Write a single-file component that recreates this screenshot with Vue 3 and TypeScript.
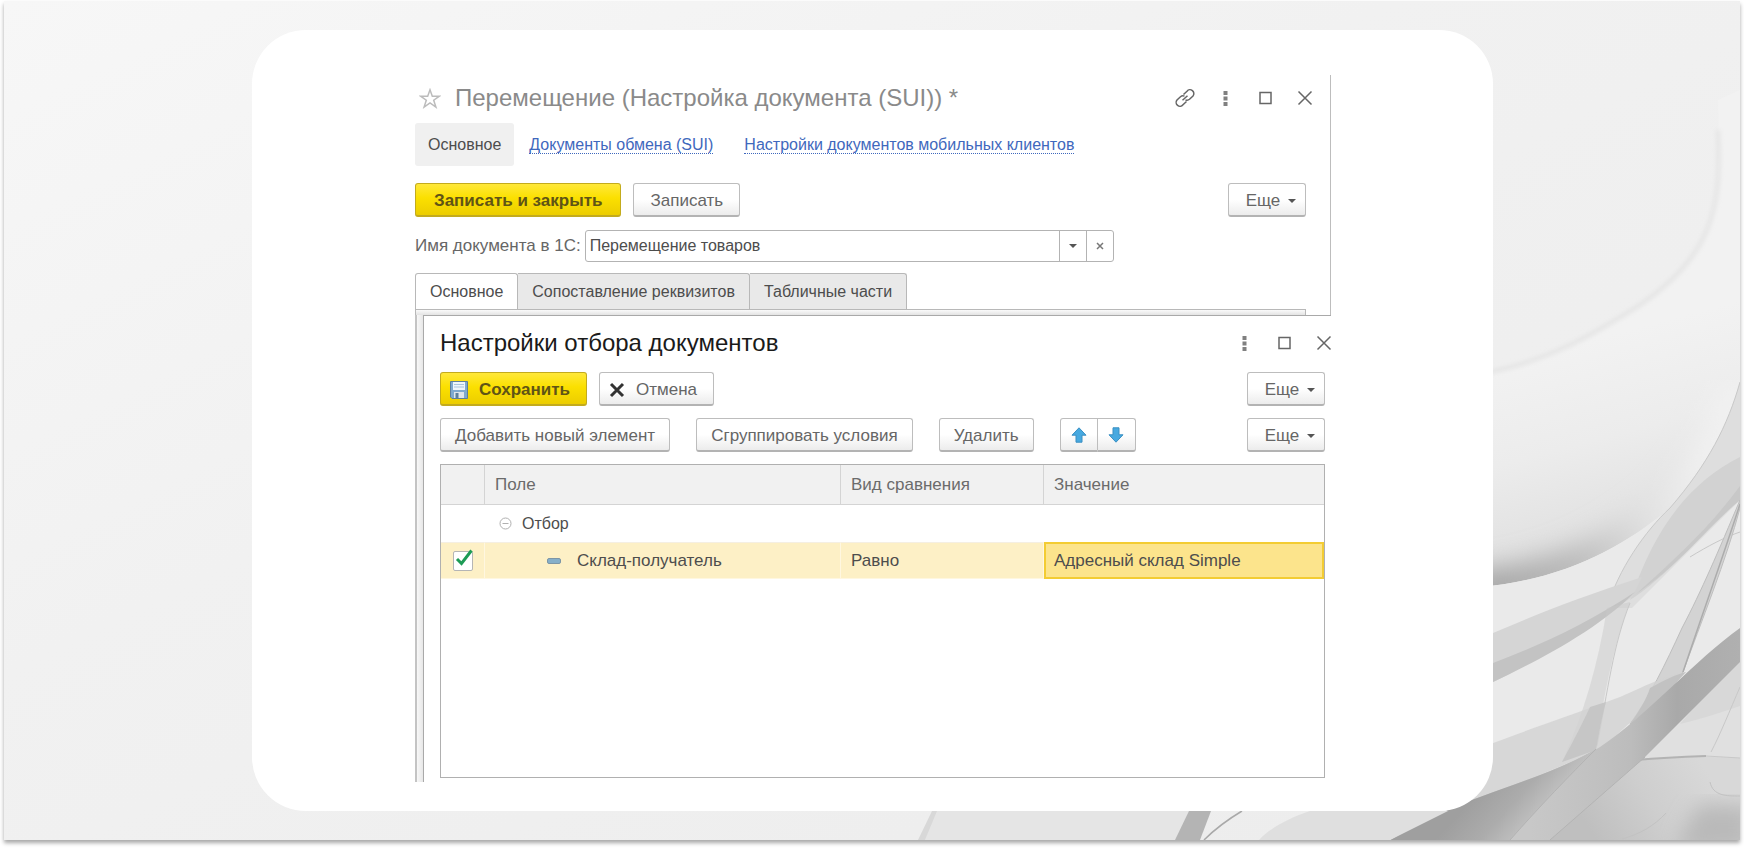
<script setup lang="ts">
import { ref } from 'vue'

interface Condition {
  enabled: boolean
  field: string
  comparison: string
  value: string
}

const documentName = ref('Перемещение товаров')
const pages = ['Основное', 'Сопоставление реквизитов', 'Табличные части']
const activePage = ref(0)
const expanded = ref(true)
const conditions = ref<Condition[]>([
  { enabled: true, field: 'Склад-получатель', comparison: 'Равно', value: 'Адресный склад Simple' },
])
</script>

<template>
  <div class="page">
    <main class="slide">
      <svg class="backdrop" viewBox="4 1 1736 839" preserveAspectRatio="none" aria-hidden="true">
        <defs>
          <linearGradient id="base" x1="0" y1="0" x2="1" y2="1">
            <stop offset="0" stop-color="#f7f7f7" />
            <stop offset="0.4" stop-color="#f1f1f1" />
            <stop offset="1" stop-color="#ececec" />
          </linearGradient>
          <linearGradient id="lip" gradientUnits="userSpaceOnUse" x1="1590" y1="340" x2="1640" y2="530">
            <stop offset="0" stop-color="#f2f2f2" />
            <stop offset="0.5" stop-color="#ececec" />
            <stop offset="1" stop-color="#e0e0e0" />
          </linearGradient>
          <linearGradient id="rim" gradientUnits="userSpaceOnUse" x1="1493" y1="0" x2="1700" y2="0">
            <stop offset="0" stop-color="#9c9c9c" />
            <stop offset="0.4" stop-color="#b4b4b4" />
            <stop offset="0.75" stop-color="#e2e2e2" />
            <stop offset="1" stop-color="#f2f2f2" />
          </linearGradient>
          <linearGradient id="band" gradientUnits="userSpaceOnUse" x1="1530" y1="0" x2="1740" y2="0">
            <stop offset="0" stop-color="#c8c8c8" />
            <stop offset="0.35" stop-color="#c0c0c0" />
            <stop offset="0.48" stop-color="#bcbcbc" />
            <stop offset="0.7" stop-color="#a9a9a9" />
            <stop offset="1" stop-color="#b0b0b0" />
          </linearGradient>
          <linearGradient id="fold" gradientUnits="userSpaceOnUse" x1="1480" y1="790" x2="1530" y2="835">
            <stop offset="0" stop-color="#9f9f9f" />
            <stop offset="0.5" stop-color="#acacac" />
            <stop offset="1" stop-color="#c6c6c6" />
          </linearGradient>
          <linearGradient id="floor" gradientUnits="userSpaceOnUse" x1="1590" y1="830" x2="1700" y2="760">
            <stop offset="0" stop-color="#bfbfbf" />
            <stop offset="0.5" stop-color="#cecece" />
            <stop offset="1" stop-color="#d8d8d8" />
          </linearGradient>
          <clipPath id="inside-lip">
            <path d="M1740 382C1728 425 1708 464 1670 508C1620 550 1560 580 1480 587V380H1740Z" />
          </clipPath>
          <filter id="haze" x="-20%" y="-20%" width="140%" height="140%"><feGaussianBlur stdDeviation="2" /></filter>
          <filter id="soft" x="-20%" y="-20%" width="140%" height="140%"><feGaussianBlur stdDeviation="10" /></filter>
          <filter id="softer" x="-20%" y="-20%" width="140%" height="140%"><feGaussianBlur stdDeviation="14" /></filter>
        </defs>
        <rect x="4" y="1" width="1736" height="839" fill="url(#base)" />
        <path d="M1718 100C1722 210 1712 255 1640 305C1600 330 1550 362 1480 374V587C1560 580 1620 550 1670 508C1708 464 1728 425 1740 382V90Z" fill="url(#lip)" />
        <path d="M1718 130C1722 210 1712 255 1640 305C1600 330 1550 362 1480 374" fill="none" stroke="#e4e4e4" stroke-width="4" filter="url(#haze)" />
        <g clip-path="url(#inside-lip)">
          <path d="M1740 382C1728 425 1708 464 1670 508C1620 550 1560 580 1470 590" fill="none" stroke="url(#rim)" stroke-width="32" filter="url(#softer)" />
        </g>
        <path d="M1740 382C1728 425 1708 464 1670 508C1620 550 1560 580 1480 587V840H1740Z" fill="#eaeaea" />
        <path d="M1740 382C1728 425 1708 464 1670 508C1645 531 1618 570 1607 608H1632L1740 500Z" fill="#dedede" />
        <path d="M1740 382C1728 425 1708 464 1670 508C1645 531 1618 570 1607 608" fill="none" stroke="#c9c9c9" />
        <path d="M1740 457C1705 475 1676 502 1652 548C1642 568 1636 584 1630 600C1668 576 1705 530 1740 500Z" fill="#d2d2d2" />
        <path d="M1740 486C1712 524 1680 555 1636 594C1680 565 1710 524 1740 500Z" fill="#c8c8c8" />
        <path d="M1493 633C1535 615 1580 597 1642 577L1632 597C1590 626 1540 660 1493 682Z" fill="#d5d5d5" />
        <path d="M1493 663C1540 645 1585 625 1635 592C1600 628 1540 660 1493 682Z" fill="#c3c3c3" />
        <path d="M1607 608C1598 665 1584 713 1562 762L1596 750C1603 700 1612 650 1630 602Z" fill="#c8c8c8" fill-opacity="0.45" />
        <path d="M1630 603C1613 645 1608 690 1597 746M1690 557C1708 546 1725 537 1740 532" fill="none" stroke="#c8c8c8" />
        <path d="M1740 500C1718 552 1702 590 1682 628C1665 665 1650 696 1630 724L1660 705C1670 690 1678 680 1683 672C1700 625 1727 558 1740 508Z" fill="#d3d3d3" stroke="#bebebe" />
        <path d="M1740 504C1724 554 1705 606 1683 672" fill="none" stroke="#acacac" stroke-width="1.5" />
        <path d="M1480 748C1535 727 1580 712 1620 697C1645 686 1662 677 1686 672L1600 750L1450 812Z" fill="#d2d2d2" fill-opacity="0.8" />
        <path d="M1562 762C1575 738 1583 722 1590 707L1606 702C1601 720 1598 740 1596 750Z" fill="#c6c6c6" />
        <path d="M1630 724C1640 710 1646 700 1650 688C1665 680 1674 675 1686 672L1660 700Z" fill="#c2c2c2" />
        <path d="M1600 780L1740 655V840H1490Z" fill="#e0e0e0" />
        <path d="M1680 724C1705 718 1722 712 1740 706V655Z" fill="#d8d8d8" />
        <path d="M1740 687C1730 710 1720 735 1711 752" fill="none" stroke="#c8c8c8" />
        <path d="M1636 759C1670 757 1710 756 1740 758V840H1540Z" fill="url(#floor)" />
        <path d="M1636 760C1660 758 1680 757 1706 756" fill="none" stroke="#b3b3b3" stroke-width="2" />
        <path d="M1706 756L1740 758" fill="none" stroke="#c8c8c8" />
        <path d="M1676 852C1688 820 1696 806 1704 804H1752V852Z" fill="#b3b3b3" fill-opacity="0.8" filter="url(#soft)" />
        <path d="M1666 813C1654 826 1640 834 1622 839M1710 782C1713 796 1726 796 1740 796" fill="none" stroke="#c2c2c2" />
        <path d="M1390 840C1425 820 1455 806 1480 797C1530 779 1570 765 1600 747C1650 713 1695 660 1740 628V662L1645 757L1550 840Z" fill="url(#band)" />
        <path d="M1390 840C1425 820 1455 806 1480 797C1530 779 1570 765 1596 749C1570 775 1540 806 1510 840Z" fill="url(#fold)" />
        <path d="M1596 749C1570 775 1540 806 1510 840M1645 757L1550 840" fill="none" stroke="#b3b3b3" />
        <path d="M935 811L925 840H1176L1190 811Z" fill="#e5e5e5" />
        <path d="M932 811L918 840H925L937 811Z" fill="#d8d8d8" />
        <path d="M1189 811H1211L1200 840H1175Z" fill="#b4b4b4" />
        <path d="M1242 811C1227 820 1212 832 1204 840" fill="none" stroke="#a9a9a9" stroke-width="1.5" />
        <path d="M1310 811C1289 818 1270 828 1259 840H1390L1448 811Z" fill="#dfdfdf" />
      </svg>

      <div class="card">
        <section class="window">
          <div class="window-top">
            <header class="titlebar">
              <button class="star" type="button" aria-label="Избранное">
                <svg viewBox="0 0 22 21"><path d="M11 1.8L13.3 8.2H20.4L14.7 12.2L16.9 19.1L11 14.9L5.1 19.1L7.3 12.2L1.6 8.2H8.7Z" /></svg>
              </button>
              <h1>Перемещение (Настройка документа (SUI)) *</h1>
              <div class="window-icons">
                <button type="button" aria-label="Ссылка">
                  <svg viewBox="0 0 22 22"><path d="M9.500 7.500L13 4.200A3.600 3.600 0 0 1 19 9L15.500 12.300A3.600 3.600 0 0 1 11.500 12.800M12.500 14.500L9 17.800A3.600 3.600 0 0 1 3 13L6.500 9.700A3.600 3.600 0 0 1 10.500 9.200M8.500 13.300L13.500 8.700" /></svg>
                </button>
                <button type="button" aria-label="Меню"><svg viewBox="0 0 22 22"><path class="dots" d="M9.500 4h4v4h-4zM9.500 9.500h4v4h-4zM9.500 15h4v4h-4z" /></svg></button>
                <button type="button" aria-label="Развернуть"><svg viewBox="0 0 22 22"><rect x="6" y="5.500" width="11" height="11" /></svg></button>
                <button type="button" aria-label="Закрыть"><svg viewBox="0 0 22 22"><path d="M4.500 4.500L17.500 17.500M17.500 4.500L4.500 17.500" /></svg></button>
              </div>
            </header>

            <nav class="links">
              <a class="current" href="#main">Основное</a>
              <a href="#exchange"><span>Документы обмена (SUI)</span></a>
              <a href="#mobile"><span>Настройки документов мобильных клиентов</span></a>
            </nav>

            <div class="toolbar">
              <button class="btn primary" type="button">Записать и закрыть</button>
              <button class="btn" type="button">Записать</button>
              <button class="btn more" type="button">Еще<i class="caret"></i></button>
            </div>

            <div class="field">
              <label for="doc-name">Имя документа в 1С:</label>
              <div class="combo">
                <input id="doc-name" v-model="documentName" type="text" />
                <button type="button" aria-label="Выбрать"><i class="caret"></i></button>
                <button type="button" aria-label="Очистить" @click="documentName = ''">
                  <svg viewBox="0 0 8 8"><path d="M1 1L7 7M7 1L1 7" /></svg>
                </button>
              </div>
            </div>

            <div class="tabs" role="tablist">
              <button
                v-for="(page, index) in pages"
                :key="page"
                type="button"
                role="tab"
                :aria-selected="activePage === index"
                :class="{ active: activePage === index }"
                @click="activePage = index"
              >{{ page }}</button>
            </div>
            <div class="tab-edge"></div>
          </div>

          <div class="panel">
            <section class="dialog" aria-labelledby="dialog-title">
              <header class="titlebar">
                <h2 id="dialog-title">Настройки отбора документов</h2>
                <div class="window-icons">
                  <button type="button" aria-label="Меню"><svg viewBox="0 0 22 22"><path class="dots" d="M9.500 4h4v4h-4zM9.500 9.500h4v4h-4zM9.500 15h4v4h-4z" /></svg></button>
                  <button type="button" aria-label="Развернуть"><svg viewBox="0 0 22 22"><rect x="6" y="5.500" width="11" height="11" /></svg></button>
                  <button type="button" aria-label="Закрыть"><svg viewBox="0 0 22 22"><path d="M4.500 4.500L17.500 17.500M17.500 4.500L4.500 17.500" /></svg></button>
                </div>
              </header>

              <div class="toolbar">
                <button class="btn primary with-icon" type="button">
                  <svg class="disk" viewBox="0 0 20 20">
                    <path d="M1.500 1.500H18.500V18.500H3L1.500 17Z" fill="#7fa9cf" stroke="#5d7f9c" />
                    <rect x="4" y="2" width="12" height="8" fill="#eef5fb" />
                    <path d="M5 4.500H15M5 7H15" stroke="#a9c4dc" />
                    <rect x="5" y="12" width="10" height="6" fill="#dfe6ec" />
                    <rect x="6.500" y="13" width="3" height="5" fill="#5d7f9c" />
                  </svg>
                  Сохранить
                </button>
                <button class="btn with-icon cancel" type="button">
                  <svg class="cross" viewBox="0 0 16 16"><path d="M2 2L14 14M14 2L2 14" /></svg>
                  Отмена
                </button>
                <button class="btn more" type="button">Еще<i class="caret"></i></button>
              </div>

              <div class="toolbar commands">
                <button class="btn" type="button">Добавить новый элемент</button>
                <button class="btn" type="button">Сгруппировать условия</button>
                <button class="btn" type="button">Удалить</button>
                <div class="pair">
                  <button class="btn" type="button" aria-label="Вверх">
                    <svg viewBox="0 0 16 16"><path d="M8 .8L15 8.200H11V15.200H5V8.200H1Z" /></svg>
                  </button>
                  <button class="btn" type="button" aria-label="Вниз">
                    <svg viewBox="0 0 16 16"><path d="M8 15.200L15 7.800H11V.8H5V7.800H1Z" /></svg>
                  </button>
                </div>
                <button class="btn more" type="button">Еще<i class="caret"></i></button>
              </div>

              <div class="grid">
                <table>
                  <colgroup><col class="c-check" /><col class="c-field" /><col class="c-kind" /><col /></colgroup>
                  <thead>
                    <tr><th aria-label="Использование"></th><th>Поле</th><th>Вид сравнения</th><th>Значение</th></tr>
                  </thead>
                  <tbody>
                    <tr class="group">
                      <td></td>
                      <td>
                        <div class="node">
                          <button class="toggle" type="button" :aria-expanded="expanded" aria-label="Свернуть" @click="expanded = !expanded">
                            <svg viewBox="0 0 13 13"><circle cx="6.500" cy="6.500" r="5.500" /><path d="M3.500 6.500H9.500" /></svg>
                          </button>
                          Отбор
                        </div>
                      </td>
                      <td></td>
                      <td></td>
                    </tr>
                    <template v-if="expanded">
                      <tr v-for="item in conditions" :key="item.field" class="selected">
                        <td>
                          <label class="check">
                            <input v-model="item.enabled" type="checkbox" :aria-label="item.field" />
                            <svg v-if="item.enabled" viewBox="0 0 20 20"><path d="M4 8L8.500 12.500L18.500 -.5" /></svg>
                          </label>
                        </td>
                        <td><div class="node leaf"><i class="dash"></i>{{ item.field }}</div></td>
                        <td>{{ item.comparison }}</td>
                        <td class="focus">{{ item.value }}</td>
                      </tr>
                    </template>
                  </tbody>
                </table>
              </div>
            </section>
          </div>
        </section>
      </div>
    </main>
  </div>
</template>

<style>
body {
  margin: 0;
  background: #fff;
}
</style>

<style scoped>
* {
  box-sizing: border-box;
}
.page {
  display: flex;
  min-height: 100vh;
  padding: 1px 4px 8px;
  font: 17px/20px "Liberation Sans", Arial, sans-serif;
  color: #4d4d4d;
}
button,
input {
  font: inherit;
  color: inherit;
}
button {
  padding: 0;
  border: 0;
  background: none;
}
svg {
  display: block;
}
.slide {
  position: relative;
  display: flex;
  flex: 1;
  min-width: 0;
  padding: 29px 247px 29px 248px;
  box-shadow: 0 3px 4px #a8a8a8;
}
.backdrop {
  position: absolute;
  inset: 0;
  width: 100%;
  height: 100%;
}
.card {
  position: relative;
  display: flex;
  flex: 1;
  min-width: 0;
  padding: 45px 162px 29px 163px;
  border-radius: 54px;
  background: #fff;
}
.window {
  display: flex;
  flex: 1;
  flex-direction: column;
  min-width: 0;
}
.window-top {
  padding-right: 24px;
  border-right: 1px solid #bdbdbd;
}
.titlebar {
  display: flex;
  align-items: center;
  height: 46px;
}
h1,
h2 {
  margin: 0;
  font-size: 24px;
  line-height: 32px;
  font-weight: 400;
  white-space: nowrap;
}
h1 {
  color: #8a8a8a;
}
h2 {
  color: #1a1a1a;
}
.star {
  width: 22px;
  margin: 0 14px 0 4px;
}
.star svg {
  fill: none;
  stroke: #bcbcbc;
  stroke-width: 1.5;
}
.window-icons {
  display: flex;
  gap: 18px;
  margin: 0 -10px 0 auto;
}
.window-icons button {
  width: 22px;
  height: 22px;
}
.window-icons svg {
  fill: none;
  stroke: #666;
  stroke-width: 1.5;
}
.window-icons .dots {
  fill: #808080;
  stroke: none;
}
.links {
  display: flex;
  align-items: center;
  height: 43px;
  gap: 31px;
  margin-top: 2px;
  font-size: 16px;
}
.links a {
  color: #3f68bd;
  text-decoration: none;
  white-space: nowrap;
}
.links span {
  border-bottom: 1px dotted #3f68bd;
}
.links .current {
  padding: 12px 13px 11px;
  margin-right: -16px;
  border-radius: 3px;
  background: #f0f0f0;
  color: #4d4d4d;
}
.toolbar {
  display: flex;
  gap: 12px;
  margin-top: 17px;
}
.btn {
  display: flex;
  align-items: center;
  justify-content: center;
  height: 34px;
  padding: 2px 16px 0;
  border: 1px solid #bdbdbd;
  border-bottom: 2px solid #b3b3b3;
  border-radius: 3px;
  background: linear-gradient(#fff 50%, #ececec);
  color: #666;
  white-space: nowrap;
}
.primary {
  padding: 2px 18px 0;
  border-color: #c3ab1d;
  background: linear-gradient(#ffe83a, #fbe000 45%, #eccd00);
  color: #5f5416;
  font-weight: 700;
}
.commands .btn {
  padding: 2px 14px 0;
}
.toolbar .more {
  gap: 8px;
  margin-left: auto;
  width: 78px;
  padding: 2px 8px 0 16px;
}
.caret {
  width: 8px;
  border: 4px solid transparent;
  border-top-color: #555;
  border-bottom: 0;
}
.field {
  display: flex;
  align-items: center;
  gap: 4px;
  margin-top: 13px;
}
.field label {
  flex: none;
  white-space: nowrap;
  color: #666;
}
.combo {
  display: flex;
  flex: 0 1 529px;
  min-width: 0;
  height: 32px;
  border: 1px solid #b3b3b3;
  border-radius: 3px;
}
.combo input {
  flex: 1;
  min-width: 0;
  padding: 0 4px;
  border: 0;
  outline: 0;
  background: none;
  font-size: 16px;
}
.combo button {
  display: flex;
  align-items: center;
  justify-content: center;
  width: 27px;
  border-left: 1px solid #b3b3b3;
}
.combo svg {
  width: 8px;
  stroke: #777;
  stroke-width: 1.5;
}
.tabs {
  display: flex;
  margin-top: 11px;
  font-size: 16px;
}
.tabs button {
  height: 36px;
  padding: 0 14px;
  border: 1px solid #b8b8b8;
  border-left: 0;
  border-bottom: 0;
  border-radius: 0 3px 0 0;
  background: #e9e9e9;
  white-space: nowrap;
}
.tabs .active {
  border-left: 1px solid #b8b8b8;
  border-radius: 3px 3px 0 0;
  background: #fff;
}
.tab-edge {
  height: 6px;
  border: 1px solid #b8b8b8;
  border-bottom: 0;
  background: linear-gradient(#fafafa, #e3e3e3);
}
.panel {
  display: flex;
  flex: 1;
  padding-left: 6px;
  border-left: 2px solid #c4c4c4;
  background: linear-gradient(90deg, #f8f8f8, #e4e4e4 7px);
}
.dialog {
  display: flex;
  flex: 1;
  flex-direction: column;
  min-width: 0;
  padding: 4px 6px 4px 16px;
  border-top: 1px solid #a9a9a9;
  border-left: 1px solid #a9a9a9;
  background: #fff;
}
.dialog .window-icons {
  margin-right: -10px;
}
.dialog .toolbar {
  margin-top: 6px;
}
.dialog .toolbar + .toolbar {
  margin-top: 12px;
}
.with-icon {
  gap: 10px;
  padding: 2px 16px 0 8px;
}
.cancel {
  gap: 11px;
  padding-left: 9px;
}
.disk {
  width: 20px;
  height: 20px;
}
.cross {
  width: 16px;
  height: 16px;
  stroke: #333;
  stroke-width: 3;
}
.commands {
  gap: 26px;
}
.pair {
  display: flex;
}
.pair .btn {
  width: 38px;
  padding: 0;
}
.pair .btn:first-child {
  border-radius: 3px 0 0 3px;
}
.pair .btn:last-child {
  border-left: 0;
  border-radius: 0 3px 3px 0;
}
.pair svg {
  width: 16px;
  fill: #47a9e0;
  stroke: #3a8fc2;
}
.grid {
  flex: 1;
  margin-top: 12px;
  border: 1px solid #b0b0b0;
}
table {
  width: 100%;
  border-collapse: separate;
  border-spacing: 0;
  table-layout: fixed;
}
.c-check {
  width: 44px;
}
.c-field {
  width: 356px;
}
.c-kind {
  width: 203px;
}
th {
  height: 40px;
  padding: 0 10px;
  border-right: 1px solid #d4d4d4;
  border-bottom: 1px solid #d4d4d4;
  background: #f1f1f1;
  color: #6b6b6b;
  font-weight: 400;
  text-align: left;
}
th:last-child {
  border-right: 0;
}
td {
  height: 37px;
  padding: 0 10px;
}
.node {
  display: flex;
  align-items: center;
}
.group .node {
  font-size: 16px;
}
.toggle {
  width: 13px;
  height: 13px;
  margin: 0 10px 0 4px;
}
.toggle svg {
  fill: none;
  stroke: #b0b0b0;
}
.selected td {
  border-right: 1px solid #fff7e0;
  border-top: 1px solid #f5efe2;
  border-bottom: 1px solid #fff7e0;
  background: #fdf0c6;
}
.selected .focus {
  padding: 0 8px;
  border: 2px solid #f3cc33;
  background: #fce48c;
}
.selected td:first-child {
  padding: 0 12px;
}
.check {
  position: relative;
  display: block;
  width: 20px;
  height: 20px;
}
.check input {
  display: block;
  width: 20px;
  height: 20px;
  margin: 0;
  appearance: none;
  border: 1px solid #b5b5b5;
  border-radius: 2px;
  background: #fff;
}
.check svg {
  position: absolute;
  inset: 0;
  width: 20px;
  height: 20px;
  overflow: visible;
  fill: none;
  stroke: #1d9b55;
  stroke-width: 3;
}
.leaf {
  padding-left: 52px;
}
.dash {
  width: 14px;
  height: 6px;
  margin-right: 16px;
  border: 1px solid #7d96a6;
  border-radius: 2px;
  background: #86afc9;
}
</style>
